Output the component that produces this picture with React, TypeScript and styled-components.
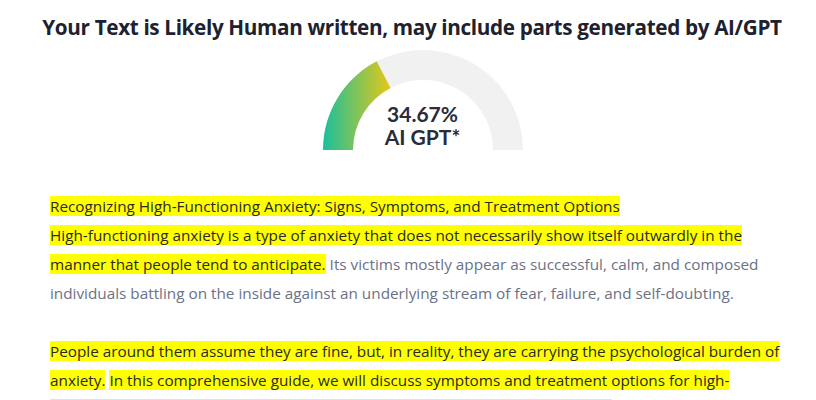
import React from "react";
import styled, { createGlobalStyle } from "styled-components";

const Global = createGlobalStyle`
  html, body { margin: 0; padding: 0; background: #ffffff; }
  body { font-family: "Open Sans", "Noto Sans", sans-serif; }
`;

const Page = styled.div`
  width: 816px;
  box-sizing: border-box;
  padding: 12px 21px 0 50px;
`;

const Title = styled.h1`
  margin: 0 -21px 0 -50px;
  padding-left: 8px;
  text-align: center;
  font-family: "Open Sans", sans-serif;
  font-weight: 700;
  font-size: 20.7px;
  line-height: 30px;
  letter-spacing: -0.35px;
  color: #20212f;
  white-space: nowrap;
`;

const GaugeWrap = styled.div`
  position: relative;
  width: 200px;
  height: 100px;
  margin: 8px auto 0;
`;

const GaugeLabel = styled.div`
  position: absolute;
  left: 0;
  right: 0;
  top: 52px;
  text-align: center;
  font-family: "Lato", sans-serif;
  font-weight: 700;
  font-size: 21px;
  line-height: 23px;
  color: #2b2c38;
`;

const Body = styled.div`
  margin-top: 42px;
  font-family: "Open Sans", sans-serif;
  font-size: 15.3px;
  line-height: 29px;
  color: #6b7186;
`;

const Para = styled.p`
  margin: 0 0 29px;
`;

const Mark = styled.span`
  background: #ffff00;
  color: #2a2a22;
`;

const Gauge: React.FC<{ value: number }> = ({ value }) => {
  const a = Math.PI - (Math.PI * value) / 100;
  const ox = 100 + 100 * Math.cos(a);
  const oy = 100 - 100 * Math.sin(a);
  const ix = 100 + 70 * Math.cos(a);
  const iy = 100 - 70 * Math.sin(a);
  return (
    <GaugeWrap>
      <svg width="200" height="100" viewBox="0 0 200 100">
        <defs>
          <linearGradient id="g" gradientUnits="userSpaceOnUse" x1="0" y1="0" x2={ix} y2="0">
            <stop offset="0" stopColor="#1bbf9c" />
            <stop offset="1" stopColor="#e6c816" />
          </linearGradient>
        </defs>
        <path d="M0,100 A100,100 0 0 1 200,100 L170,100 A70,70 0 0 0 30,100 Z" fill="#f1f1f1" />
        <path
          d={`M0,100 A100,100 0 0 1 ${ox},${oy} L${ix},${iy} A70,70 0 0 0 30,100 Z`}
          fill="url(#g)"
        />
      </svg>
      <GaugeLabel>
        34.67%
        <br />
        AI GPT*
      </GaugeLabel>
    </GaugeWrap>
  );
};

export default function App() {
  return (
    <>
      <Global />
      <Page>
        <Title>Your Text is Likely Human written, may include parts generated by AI/GPT</Title>
        <Gauge value={34.67} />
        <Body>
          <Para>
            <Mark>Recognizing High-Functioning Anxiety: Signs, Symptoms, and Treatment Options</Mark>
            <br />
            <Mark>
              High-functioning anxiety is a type of anxiety that does not necessarily show itself outwardly in the
              manner that people tend to anticipate.
            </Mark>{" "}
            Its victims mostly appear as successful, calm, and composed individuals battling on the inside against an
            underlying stream of fear, failure, and self-doubting.
          </Para>
          <Para>
            <Mark>
              People around them assume they are fine, but, in reality, they are carrying the psychological burden of
              anxiety.
            </Mark>{" "}
            <Mark>
              In this comprehensive guide, we will discuss symptoms and treatment options for high-functioning anxiety
              so that you can recognize it and get the help that you need.
            </Mark>
          </Para>
        </Body>
      </Page>
    </>
  );
}
